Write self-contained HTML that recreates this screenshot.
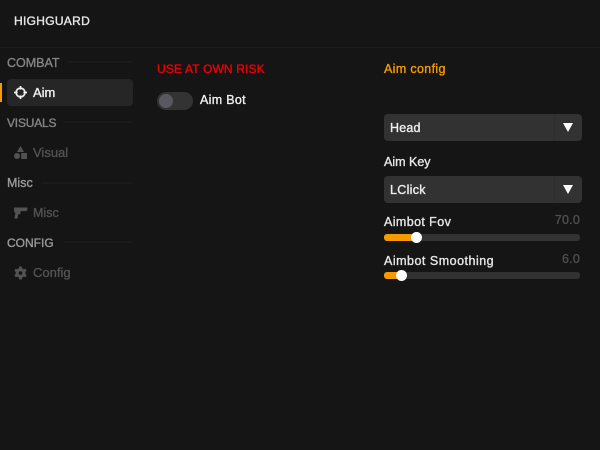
<!DOCTYPE html>
<html><head><meta charset="utf-8">
<style>
html,body{margin:0;padding:0;background:#151515;}
#r{position:relative;width:600px;height:450px;overflow:hidden;background:#151515;font-family:"Liberation Sans",sans-serif;font-size:13px;color:#e6e6e6;}
#r>*{position:absolute;}
.t{white-space:nowrap;line-height:16px;-webkit-text-stroke:0.35px currentColor;}
.sec{color:#858585;}
.ln{height:2px;background:#1a1a1a;border-radius:1px;}
.dim{color:#525252;}
.dd{left:384px;width:198px;height:27px;background:#323232;border-radius:4px;}
.dd b{position:absolute;left:170px;top:0;width:1px;height:27px;background:#2e2e2e;}
.dd i{position:absolute;left:179px;top:9px;width:0;height:0;border-left:5.5px solid transparent;border-right:5.5px solid transparent;border-top:9px solid #fff;}
.tr{left:384px;width:196px;height:7px;background:#323232;border-radius:3px;}
.fl{left:384px;height:7px;background:#f59a00;border-radius:3px 0 0 3px;}
.kn{width:11px;height:11px;border-radius:50%;background:#fff;}
</style></head><body>
<div id="r">
<div class="t" style="left:14px;top:13px;font-size:12px;color:#e8e8e8;letter-spacing:.3px">HIGHGUARD</div>
<div style="left:0;top:47px;width:600px;height:1px;background:#1c1c1c"></div>

<div class="t sec" style="left:7px;top:55px;font-size:12.5px">COMBAT</div>
<div class="ln" style="left:68px;top:61px;width:65px"></div>
<div style="left:0;top:83px;width:2px;height:19px;background:#f59a00"></div>
<div style="left:7px;top:79px;width:126px;height:27px;background:#262626;border-radius:4px"></div>
<svg style="left:14px;top:86px" width="13" height="13" viewBox="0 0 13 13" fill="none" stroke="#f0f0f0"><circle cx="6.5" cy="6.5" r="4.4" stroke-width="1.7"/><path d="M6.5 0v3.6M6.5 9.4V13M0 6.5h3.6M9.4 6.5H13" stroke-width="1.7"/></svg>
<div class="t" style="left:33px;top:85px;color:#eee">Aim</div>

<div class="t sec" style="left:7px;top:115px;font-size:12px;letter-spacing:-.2px">VISUALS</div>
<div class="ln" style="left:63px;top:121px;width:70px"></div>
<svg style="left:14px;top:146px" width="13" height="13" viewBox="0 0 13 13" fill="#525252"><path d="M6.5 0L10 6H3z"/><circle cx="3" cy="10" r="3"/><rect x="7.2" y="7" width="5.8" height="6"/></svg>
<div class="t dim" style="left:33px;top:145px">Visual</div>

<div class="t sec" style="left:7px;top:175px;color:#9a9a9a;font-size:12.5px">Misc</div>
<div class="ln" style="left:41px;top:182px;width:92px"></div>
<svg style="left:13px;top:207px" width="15" height="12" viewBox="0 0 15 13" fill="#525252"><path d="M0.5 0.5H15V3.5L13.5 4.5H7.5V6.5Q7.5 8 5.5 8H5L4.3 12.5H0.8L2 6.5L0.5 5z"/></svg>
<div class="t dim" style="left:33px;top:205px;font-size:12.5px">Misc</div>

<div class="t sec" style="left:7px;top:235px;color:#9a9a9a;font-size:12px">CONFIG</div>
<div class="ln" style="left:63px;top:241px;width:70px"></div>
<svg style="left:14px;top:266px" width="13" height="14" viewBox="0 0 13 14" fill="none" stroke="#525252"><circle cx="6.5" cy="7" r="3.4" stroke-width="3.2"/><path d="M6.5 0.5v2.5M6.5 11v2.5M1 3.8l2.1 1.2M9.9 9l2.1 1.2M1 10.2L3.1 9M9.9 5L12 3.8" stroke-width="2.8"/></svg>
<div class="t dim" style="left:33px;top:265px">Config</div>

<div class="t" style="left:157px;top:61px;font-size:12px;color:#f00000;letter-spacing:.15px">USE AT OWN RISK</div>
<div style="left:157px;top:92px;width:36px;height:18px;background:#333;border-radius:9px"></div>
<div style="left:159px;top:94px;width:14px;height:14px;background:#5a585f;border-radius:50%"></div>
<div class="t" style="left:200px;top:92px;font-size:12.5px;color:#eee;letter-spacing:.3px">Aim Bot</div>

<div class="t" style="left:384px;top:61px;font-size:12.5px;color:#f59a00;letter-spacing:.35px">Aim config</div>
<div class="dd" style="top:114px"><b></b><i></i></div>
<div class="t" style="left:390px;top:120px;font-size:12.5px;color:#eee;letter-spacing:.2px">Head</div>
<div class="t" style="left:384px;top:154px;font-size:12.5px;color:#e6e6e6">Aim Key</div>
<div class="dd" style="top:176px"><b></b><i></i></div>
<div class="t" style="left:390px;top:182px;font-size:12.5px;color:#eee;letter-spacing:.3px">LClick</div>

<div class="t" style="left:384px;top:214px;font-size:12.5px;color:#e6e6e6;letter-spacing:.4px">Aimbot Fov</div>
<div class="t" style="right:20px;top:212px;font-size:12.5px;color:#4e4e4e;letter-spacing:.2px">70.0</div>
<div class="tr" style="top:233.5px"></div>
<div class="fl" style="top:233.5px;width:33px"></div>
<div class="kn" style="left:411px;top:231.5px"></div>

<div class="t" style="left:384px;top:253px;font-size:12.5px;color:#e6e6e6;letter-spacing:.5px">Aimbot Smoothing</div>
<div class="t" style="right:20px;top:251px;font-size:12.5px;color:#4e4e4e;letter-spacing:.2px">6.0</div>
<div class="tr" style="top:272px"></div>
<div class="fl" style="top:272px;width:18px"></div>
<div class="kn" style="left:396px;top:270px"></div>
</div>
</body></html>
